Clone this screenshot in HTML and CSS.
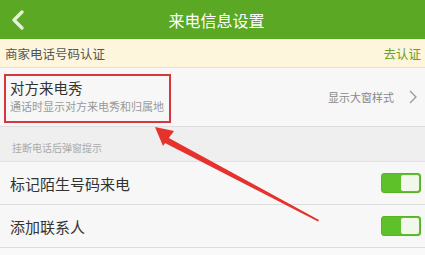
FILE: index.html
```html
<!DOCTYPE html>
<html lang="zh">
<head>
    <meta charset="UTF-8">
    <title>来电信息设置</title>
    <link rel="stylesheet" href="styles.css">
</head>
<body>
    <div class="header">
        <svg class="back" width="14" height="20" viewBox="0 0 14 20">
            <path d="M11 2 L3 10 L11 18" fill="none" stroke="#e6f3da" stroke-width="3.2" stroke-linecap="round" stroke-linejoin="round"/>
        </svg>
        <div class="title">来电信息设置</div>
    </div>

    <div class="banner">
        <span>商家电话号码认证</span>
        <span class="go">去认证</span>
    </div>

    <div class="row show">
        <div class="mark">
            <div class="name">对方来电秀</div>
            <div class="desc">通话时显示对方来电秀和归属地</div>
        </div>
        <div class="value">
            显示大窗样式
            <svg width="8" height="14" viewBox="0 0 8 14">
                <path d="M1 1 L7 7 L1 13" fill="none" stroke="#999" stroke-width="1.3"/>
            </svg>
        </div>
    </div>

    <div class="section">挂断电话后弹窗提示</div>

    <div class="row item">
        <div class="label">标记陌生号码来电</div>
        <div class="switch"><div class="knob"></div></div>
    </div>
    <div class="row item">
        <div class="label">添加联系人</div>
        <div class="switch"><div class="knob"></div></div>
    </div>
    <div class="rest"></div>

    <!-- стрелка поверх всего -->
    <svg class="arrow" width="425" height="255" viewBox="0 0 425 255">
        <polygon points="167,137 319,220 318,221.5 163,142" fill="#e5322c"/>
        <polygon points="155,127 174,131 163,146" fill="#e5322c"/>
    </svg>
</body>
</html>
```

FILE: styles.css
```css
*{
    box-sizing: border-box;
}
body{
    margin: 0;
    width: 425px;
    height: 255px;
    overflow: hidden;
    background: #f4f4f4;
    font-family: "Noto Sans CJK SC", "Noto Sans", sans-serif;
    position: relative;
}
.header{
    height: 39px;
    background: #5aa823;
    display: flex;
    align-items: center;
    position: relative;
}
.back{
    margin-left: 11px;
}
.title{
    position: absolute;
    left: 0;
    right: 0;
    text-align: center;
    padding-left: 8px;
    color: #fff;
    font-size: 16px;
}
.banner{
    height: 29px;
    background: #fdf5dc;
    border-bottom: 1px solid #e8e2cc;
    display: flex;
    align-items: center;
    justify-content: space-between;
    padding: 0 4px 0 5px;
    font-size: 12.5px;
    color: #555;
}
.go{
    color: #6a9f28;
}
.row{
    display: flex;
    align-items: center;
    justify-content: space-between;
    background: #f7f7f7;
    border-bottom: 1px solid #dcdcdc;
}
.show{
    height: 59px;
    padding: 0 8px 0 4px;
}
.mark{
    width: 167px;
    height: 49px;
    margin-top: 2px;
    border: 2px solid #d7373a;
    padding: 3px 0 0 4px;
}
.name{
    font-size: 14.5px;
    color: #333;
    line-height: 18px;
}
.desc{
    font-size: 11px;
    color: #999;
    line-height: 16px;
    margin-top: 1px;
    white-space: nowrap;
}
.value{
    display: flex;
    align-items: center;
    gap: 15px;
    font-size: 11px;
    color: #888;
}
.section{
    height: 35px;
    background: #efefef;
    border-bottom: 1px solid #e2e2e2;
    display: flex;
    align-items: flex-end;
    padding: 0 0 6px 12px;
    font-size: 10px;
    color: #aaa;
}
.item{
    height: 43px;
    padding: 0 4px 0 10px;
}
.label{
    font-size: 15px;
    color: #333;
}
.switch{
    width: 40px;
    height: 20px;
    border-radius: 3px;
    background: #5ec12a;
    border: 1px solid #58b326;
    display: flex;
    justify-content: flex-end;
    padding: 1px;
}
.knob{
    width: 18px;
    height: 16px;
    border-radius: 2px;
    background: #f2f7ec;
}
.rest{
    height: 8px;
    background: #f9f9f9;
}
.arrow{
    position: absolute;
    left: 0;
    top: 0;
}
```
